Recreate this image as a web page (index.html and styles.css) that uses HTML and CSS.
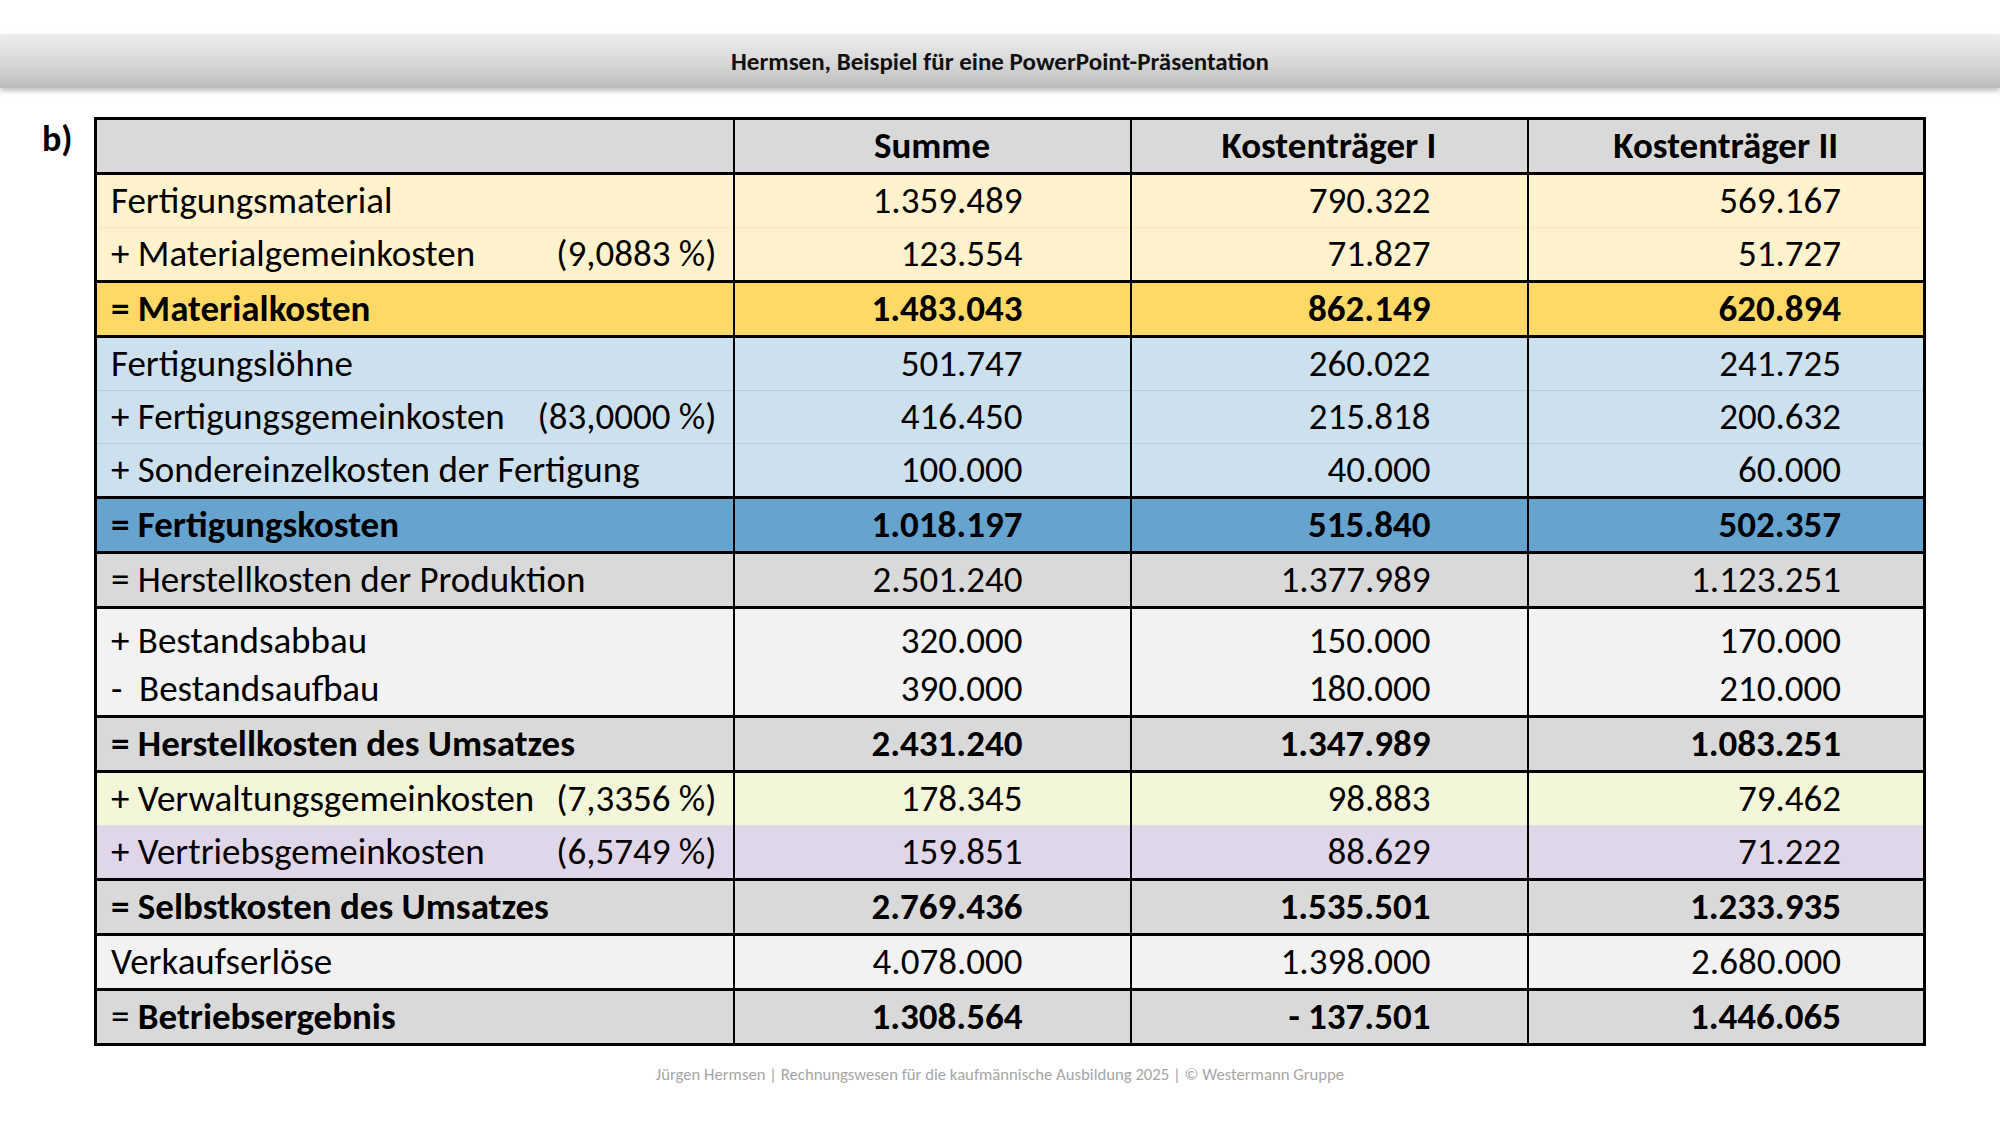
FILE: index.html
```html
<!DOCTYPE html>
<html lang="de">
<head>
<meta charset="utf-8">
<title>Hermsen, Beispiel für eine PowerPoint-Präsentation</title>
<link rel="stylesheet" href="styles.css">
</head>
<body>
<div class="titlebar">Hermsen, Beispiel für eine PowerPoint-Präsentation</div>

<div class="slide">
  <div class="task">b)</div>
  <table class="calc">
    <colgroup>
      <col class="c-label">
      <col class="c-num">
      <col class="c-num">
      <col class="c-num">
    </colgroup>
    <tr class="head">
      <td></td>
      <td>Summe</td>
      <td>Kostenträger I</td>
      <td>Kostenträger II</td>
    </tr>
    <!-- Materialbereich -->
    <tr class="mat">
      <td>Fertigungsmaterial</td>
      <td>1.359.489</td><td>790.322</td><td>569.167</td>
    </tr>
    <tr class="mat sub">
      <td><div class="lbl"><span>+ Materialgemeinkosten</span><span>(9,0883 %)</span></div></td>
      <td>123.554</td><td>71.827</td><td>51.727</td>
    </tr>
    <tr class="mat-sum total">
      <td>= Materialkosten</td>
      <td>1.483.043</td><td>862.149</td><td>620.894</td>
    </tr>
    <!-- Fertigungsbereich -->
    <tr class="fert">
      <td>Fertigungslöhne</td>
      <td>501.747</td><td>260.022</td><td>241.725</td>
    </tr>
    <tr class="fert sub">
      <td><div class="lbl"><span>+ Fertigungsgemeinkosten</span><span>(83,0000 %)</span></div></td>
      <td>416.450</td><td>215.818</td><td>200.632</td>
    </tr>
    <tr class="fert sub">
      <td>+ Sondereinzelkosten der Fertigung</td>
      <td>100.000</td><td>40.000</td><td>60.000</td>
    </tr>
    <tr class="fert-sum total">
      <td>= Fertigungskosten</td>
      <td>1.018.197</td><td>515.840</td><td>502.357</td>
    </tr>
    <tr class="grey">
      <td>= Herstellkosten der Produktion</td>
      <td>2.501.240</td><td>1.377.989</td><td>1.123.251</td>
    </tr>
    <tr class="light double">
      <td><div>+ Bestandsabbau</div><div>-&nbsp; Bestandsaufbau</div></td>
      <td><div>320.000</div><div>390.000</div></td>
      <td><div>150.000</div><div>180.000</div></td>
      <td><div>170.000</div><div>210.000</div></td>
    </tr>
    <tr class="grey total">
      <td>= Herstellkosten des Umsatzes</td>
      <td>2.431.240</td><td>1.347.989</td><td>1.083.251</td>
    </tr>
    <tr class="verw">
      <td><div class="lbl"><span>+ Verwaltungsgemeinkosten</span><span>(7,3356 %)</span></div></td>
      <td>178.345</td><td>98.883</td><td>79.462</td>
    </tr>
    <tr class="vert sub plain">
      <td><div class="lbl"><span>+ Vertriebsgemeinkosten</span><span>(6,5749 %)</span></div></td>
      <td>159.851</td><td>88.629</td><td>71.222</td>
    </tr>
    <tr class="grey total">
      <td>= Selbstkosten des Umsatzes</td>
      <td>2.769.436</td><td>1.535.501</td><td>1.233.935</td>
    </tr>
    <tr class="light">
      <td>Verkaufserlöse</td>
      <td>4.078.000</td><td>1.398.000</td><td>2.680.000</td>
    </tr>
    <tr class="grey">
      <td>= <b>Betriebsergebnis</b></td>
      <td><b>1.308.564</b></td><td><b>- 137.501</b></td><td><b>1.446.065</b></td>
    </tr>
  </table>
</div>

<div class="footer">Jürgen Hermsen | Rechnungswesen für die kaufmännische Ausbildung 2025 | © Westermann Gruppe</div>
</body>
</html>
```

FILE: styles.css
```css
body{
margin:0;
width:2000px;
height:1125px;
overflow:hidden;
background:#fff;
font-family:"Carlito","Lato","Liberation Sans",sans-serif;
color:#000;
}
.titlebar{
margin-top:34px;
height:54px;
line-height:56px;
text-align:center;
font-size:25px;
font-weight:bold;
color:#111;
background:linear-gradient(#ededed,#d4d4d4 60%,#bcbcbc);
box-shadow:0 3px 5px rgba(0,0,0,0.25);
}
.slide{
display:flex;
align-items:flex-start;
padding:29px 0 0 42px;
}
.task{
width:52px;
font-size:36px;
font-weight:bold;
line-height:40px;
margin-top:2px;
}
.calc{
border-collapse:collapse;
border:3px solid #000;
font-size:37px;
table-layout:fixed;
}
.c-label{width:638px;}
.c-num{width:397px;}
.calc td{
height:52px;
padding:0;
border-top:3px solid #000;
border-left:2px solid #000;
text-align:right;
white-space:nowrap;
line-height:42px;
}
.calc td:first-child{
text-align:left;
padding:0 16px 0 14px;
}
.calc td:nth-child(2){padding-right:107px;}
.calc td:nth-child(3){padding-right:96px;}
.calc td:nth-child(4){padding-right:82px;}
.lbl{
display:flex;
justify-content:space-between;
}
.calc tr.head td{
text-align:center;
font-weight:bold;
padding:0;
background:#d9d9d9;
}
.calc tr.total td{font-weight:bold;}
.calc tr.sub td{border-top:1px solid #f7e9bf;}
.calc tr.fert.sub td{border-top:1px solid #b6cbdb;}
.calc tr.plain td{border-top:1px solid #e3dde6;}
.calc tr.double td{height:100px;padding-top:6px;}
.calc tr.double td div{line-height:48px;}

.mat td{background:#fff2cc;}
.mat-sum td{background:#ffd966;}
.fert td{background:#cde0ee;}
.fert-sum td{background:#66a3cf;}
.grey td{background:#d9d9d9;}
.light td{background:#f2f2f2;}
.verw td{background:#f3f6d8;}
.vert td{background:#e0d6ea;}

.footer{
margin-top:18px;
text-align:center;
font-size:16.7px;
color:#a6a6a6;
}
```
